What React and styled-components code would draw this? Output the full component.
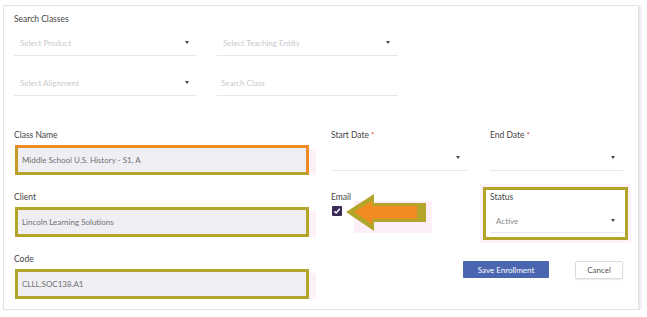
import React from 'react'
import styled, { createGlobalStyle } from 'styled-components'

const Global = createGlobalStyle`
  * { box-sizing: border-box; }
  body {
    margin: 0;
    background: #fff;
    font-family: Lato, "Noto Sans", sans-serif;
    color: #444;
  }
`;

function Select({ placeholder, value }) {
    return (
        <SelectBox>
            <SelectText muted={!value}>{value || placeholder}</SelectText>
            <Caret/>
        </SelectBox>
    )
}

function Arrow() {
    return (
        <ArrowSvg width="86" height="42" viewBox="0 0 86 42">
            <rect x="8" y="7" width="78" height="32" fill="#fdeef8"/>
            <polygon points="0,18 28,0 28,9 80,9 80,28 28,28 28,37" fill="#b3a42a"/>
            <polygon points="8,18 26,7 26,12 71,12 71,25 26,25 26,30" fill="#f18b22"/>
        </ArrowSvg>
    )
}

export default function App() {
    return (
        <>
            <Global/>
            <Card>
                <Title>Search Classes</Title>
                <SearchGrid>
                    <Select placeholder="Select Product"/>
                    <Select placeholder="Select Teaching Entity"/>
                    <Select placeholder="Select Alignment"/>
                    <SearchInput>Search Class</SearchInput>
                </SearchGrid>

                <FormGrid>
                    <Field>
                        <Label>Class Name</Label>
                        <Input tone="orange">Middle School U.S. History - S1, A</Input>
                    </Field>
                    <Field>
                        <Label>Start Date <Star>*</Star></Label>
                        <Select/>
                    </Field>
                    <Field>
                        <Label>End Date <Star>*</Star></Label>
                        <Select/>
                    </Field>

                    <Field>
                        <Label>Client</Label>
                        <Input>Lincoln Learning Solutions</Input>
                    </Field>
                    <EmailField>
                        <Label>Email</Label>
                        <Check>
                            <svg width="8" height="8" viewBox="0 0 8 8">
                                <path d="M1.3 4.2 L3.2 6 L6.8 1.8" stroke="#fff" strokeWidth="1.4" fill="none"/>
                            </svg>
                        </Check>
                        <Arrow/>
                    </EmailField>
                    <StatusField>
                        <Label>Status</Label>
                        <Select value="Active"/>
                    </StatusField>

                    <Field>
                        <Label>Code</Label>
                        <Input>CLLL.SOC138.A1</Input>
                    </Field>
                    <Actions>
                        <PrimaryButton>Save Enrollment</PrimaryButton>
                        <GhostButton>Cancel</GhostButton>
                    </Actions>
                </FormGrid>
            </Card>
        </>
    )
}

const Card = styled.div`
  margin: 5px 0 0 3px;
  width: 636px;
  height: 305px;
  border: 1px solid #e2e2e2;
  box-shadow: 2px 1px 2px rgba(120, 120, 160, 0.18);
  padding: 7px 0 0 10px;
  background: #fff;
`;

const Title = styled.div`
  font-size: 8.5px;
  line-height: 12px;
  color: #444;
`;

const SearchGrid = styled.div`
  display: grid;
  grid-template-columns: 183px 181px;
  column-gap: 20px;
  row-gap: 14px;
  margin-top: 5px;
`;

const SelectBox = styled.div`
  height: 26px;
  display: flex;
  align-items: center;
  justify-content: space-between;
  padding: 0 8px 0 6px;
  border-bottom: 1px solid #e8e8ec;
`;

const SelectText = styled.span`
  font-size: 8px;
  color: ${p => p.muted ? '#c9c9cc' : '#8a8a8a'};
`;

const Caret = styled.span`
  width: 0;
  height: 0;
  border-left: 2.5px solid transparent;
  border-right: 2.5px solid transparent;
  border-top: 3px solid #444;
`;

const SearchInput = styled.div`
  height: 26px;
  display: flex;
  align-items: center;
  padding-left: 4px;
  font-size: 8px;
  color: #c9c9cc;
  border-bottom: 1px solid #e8e8ec;
`;

const FormGrid = styled.div`
  display: grid;
  grid-template-columns: 295px 137px 133px;
  column-gap: 22px;
  row-gap: 16px;
  margin-top: 33px;
`;

const Field = styled.div`
  display: flex;
  flex-direction: column;
  gap: 4px;
  height: 46px;
`;

const Label = styled.div`
  font-size: 8.5px;
  line-height: 12px;
  color: #444;
  white-space: nowrap;
`;

const Star = styled.span`
  color: #d33;
  font-size: 7px;
`;

const Input = styled.div`
  height: 30px;
  margin-left: 1px;
  display: flex;
  align-items: center;
  padding-left: 4px;
  font-size: 8px;
  color: #707070;
  background: #efeff3;
  border: 3px solid #b3a42a;
  border-color: ${p => p.tone === 'orange' ? '#f08a24 #f08a24 #b3a42a #c69a2a' : '#b3a42a'};
  box-shadow: 9px 2px 0 -2px #fdf0f8;
`;

const EmailField = styled(Field)`
  position: relative;
  gap: 3px;
`;

const Check = styled.div`
  width: 10px;
  height: 10px;
  margin-left: 1px;
  border-radius: 1px;
  background: #3b2a56;
  display: flex;
  align-items: center;
  justify-content: center;
`;

const ArrowSvg = styled.svg`
  position: absolute;
  left: 15px;
  top: 3px;
`;

const StatusField = styled(Field)`
  && {
    margin: -4px -5px -3px -7px;
    height: auto;
  }
  gap: 0;
  padding: 1px 2px 0 4px;
  border: 3px solid #b3a42a;
  box-shadow: 0 0 0 3px #fdf0f8;
  ${SelectBox} { height: 30px; padding-top: 6px; }
`;

const Actions = styled.div`
  grid-column: 2 / span 2;
  display: flex;
  justify-content: flex-end;
  align-items: flex-start;
  gap: 26px;
  padding-top: 8px;
`;

const PrimaryButton = styled.button`
  width: 86px;
  height: 17px;
  border: none;
  border-radius: 1px;
  background: #4a66b1;
  color: #fff;
  font-family: inherit;
  font-size: 8px;
  padding: 0;
`;

const GhostButton = styled.button`
  width: 48px;
  height: 18px;
  border: 1px solid #dcdcdc;
  border-radius: 2px;
  background: #fff;
  color: #555;
  font-family: inherit;
  font-size: 8px;
  padding: 0;
  box-shadow: 0 1px 1px rgba(0,0,0,0.08);
`;
